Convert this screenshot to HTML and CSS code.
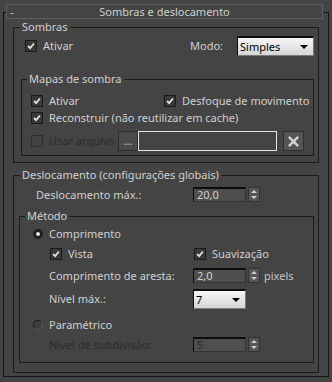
FILE: index.html
```html
<!DOCTYPE html>
<html lang="pt">
<head>
  <meta charset="UTF-8">
  <title>Sombras e deslocamento</title>
  <link rel="stylesheet" href="styles.css">
</head>
<body>
<div class="panel">
  <div class="rollout-head">
    <span class="toggle">-</span>
    <span class="rollout-title">Sombras e deslocamento</span>
  </div>

  <fieldset class="group group-sombras">
    <legend>Sombras</legend>
    <div class="row row-tall row-mode">
      <label class="check"><span class="box on"><svg viewBox="0 0 12 12"><path d="M2.5 6 L5 8.5 L9.5 3"/></svg></span>Ativar</label>
      <div class="mode">
        <span>Modo:</span>
        <div class="dropdown dropdown-mode"><span>Simples</span><i class="caret"></i></div>
      </div>
    </div>

    <fieldset class="group group-mapas">
      <legend>Mapas de sombra</legend>
      <div class="row row-pad-mapas">
        <label class="check col-mapas"><span class="box on"><svg viewBox="0 0 12 12"><path d="M2.5 6 L5 8.5 L9.5 3"/></svg></span>Ativar</label>
        <label class="check"><span class="box on"><svg viewBox="0 0 12 12"><path d="M2.5 6 L5 8.5 L9.5 3"/></svg></span>Desfoque de movimento</label>
      </div>
      <div class="row row-pad-mapas">
        <label class="check"><span class="box on"><svg viewBox="0 0 12 12"><path d="M2.5 6 L5 8.5 L9.5 3"/></svg></span>Reconstruir (não reutilizar em cache)</label>
      </div>
      <div class="row row-tall row-pad-mapas row-file">
        <label class="check disabled col-file"><span class="box"></span>Usar arquivo</label>
        <button class="btn-dots">...</button>
        <div class="file-field"></div>
        <button class="btn-clear"><svg viewBox="0 0 14 14"><path d="M2 2 L12 12 M12 2 L2 12"/></svg></button>
      </div>
    </fieldset>
  </fieldset>

  <fieldset class="group group-desloc">
    <legend>Deslocamento (configurações globais)</legend>
    <div class="row row-pad-desloc">
      <span class="label col-desloc">Deslocamento máx.:</span>
      <div class="spinner-field">20,0</div>
      <div class="spinner-arrows"><i class="up"></i><i class="down"></i></div>
    </div>

    <fieldset class="group group-metodo">
      <legend>Método</legend>
      <div class="row row-pad-radio">
        <label class="radio"><span class="dot on"></span>Comprimento</label>
      </div>
      <div class="row row-pad-sub row-vista">
        <label class="check col-vista"><span class="box on"><svg viewBox="0 0 12 12"><path d="M2.5 6 L5 8.5 L9.5 3"/></svg></span>Vista</label>
        <label class="check"><span class="box on"><svg viewBox="0 0 12 12"><path d="M2.5 6 L5 8.5 L9.5 3"/></svg></span>Suavização</label>
      </div>
      <div class="row row-pad-label row-aresta">
        <span class="label col-metodo">Comprimento de aresta:</span>
        <div class="spinner-field">2,0</div>
        <div class="spinner-arrows"><i class="up"></i><i class="down"></i></div>
        <span class="unit">pixels</span>
      </div>
      <div class="row row-tall row-pad-label row-nivel">
        <span class="label col-metodo">Nível máx.:</span>
        <div class="dropdown dropdown-small"><span>7</span><i class="caret"></i></div>
      </div>
      <div class="row row-pad-radio row-param">
        <label class="radio"><span class="dot"></span>Paramétrico</label>
      </div>
      <div class="row row-pad-label row-subdiv disabled">
        <span class="label col-metodo">Nível de subdivisão:</span>
        <div class="spinner-field">5</div>
        <div class="spinner-arrows"><i class="up"></i><i class="down"></i></div>
      </div>
    </fieldset>
  </fieldset>
</div>
</body>
</html>
```

FILE: styles.css
```css
:root {
  --panel-bg: #444444;
  --text-color: #d0d0d0;
  --disabled-text: #2c2c2c;
  --line-color: #1c1c1c;
  --frame-color: #161616;
}

* {
  box-sizing: border-box;
}

body {
  margin: 0;
  background-color: var(--panel-bg);
  color: var(--text-color);
  font-family: "Noto Sans", "Liberation Sans", sans-serif;
  font-size: 11px;
  line-height: 14px;
}

/* rollout frame */
.panel {
  margin: 12px 3px 0;
  height: 365px;
  border: 1px solid var(--frame-color);
}

.rollout-head {
  display: grid;
  grid-template-columns: 1fr auto 1fr;
  align-items: center;
  height: 15px;
  margin: -9px 5px 0 2px;
  border: 1px solid #5e5e5e;
  background-color: var(--panel-bg);
  line-height: 13px;
}

.toggle {
  padding-left: 3px;
}

/* group boxes */
.group {
  margin: 0;
  padding: 0;
  min-width: 0;
  border: 1px solid var(--line-color);
}

.group legend {
  padding: 0 2px;
  margin-left: 6px;
  line-height: 14px;
}

.group-sombras {
  margin: 1px 9px 0;
  padding: 2px 0 6px;
}

.group-mapas {
  margin: 16px 4px 0 7px;
  padding: 6px 0 4px;
}

.group-mapas legend,
.group-metodo legend {
  margin-left: 5px;
}

.group-desloc {
  margin: 5px 9px 0;
  padding: 4px 0 9px;
}

.group-metodo {
  margin: 6px 4px 0 5px;
  padding: 2px 0 9px;
}

/* rows */
.row {
  display: flex;
  align-items: center;
  height: 17px;
  white-space: nowrap;
}

.row-tall {
  height: 20px;
}

.row-mode {
  padding-left: 11px;
}

.mode {
  display: flex;
  align-items: center;
  gap: 14px;
  margin-left: auto;
  margin-right: 4px;
}

.row-pad-mapas {
  padding-left: 9px;
}

.row-file {
  margin-top: 5px;
}

.row-pad-desloc {
  padding-left: 22px;
}

.row-pad-radio {
  padding-left: 13px;
}

.row-pad-sub {
  padding-left: 30px;
}

.row-pad-label {
  padding-left: 29px;
}

.row-vista {
  margin-top: 3px;
}

.row-aresta,
.row-nivel {
  margin-top: 5px;
}

.row-param {
  margin-top: 7px;
}

.row-subdiv {
  margin-top: 3px;
}

.col-mapas {
  width: 133px;
}

.col-file {
  width: 87px;
}

.col-desloc {
  width: 157px;
}

.col-metodo {
  width: 144px;
}

.col-vista {
  width: 144px;
}

/* checkboxes and radios */
.check,
.radio {
  display: flex;
  align-items: center;
}

.box {
  width: 12px;
  height: 12px;
  margin-right: 6px;
  border: 1px solid #1a1a1a;
  background-color: #383838;
}

.box svg {
  display: block;
  width: 10px;
  height: 10px;
  fill: none;
  stroke: #e0e0e0;
  stroke-width: 2.2;
}

.disabled {
  color: var(--disabled-text);
}

.disabled .box {
  border-color: #2e2e2e;
  background-color: #424242;
}

.dot {
  width: 10px;
  height: 10px;
  margin-right: 6px;
  border-radius: 50%;
  border: 1px solid #1c1c1c;
  border-right-color: #5a5a5a;
  border-bottom-color: #5a5a5a;
  background-color: #3e3e3e;
}

.dot.on {
  border: 3px solid #1e1e1e;
  background-color: #e8e8e8;
}

/* inputs */
.dropdown {
  display: flex;
  align-items: center;
  justify-content: space-between;
  height: 20px;
  padding: 0 5px 0 2px;
  border: 1px solid #7a7a7a;
  border-top: 2px solid #0c0c0c;
  border-left-color: #0c0c0c;
  background: linear-gradient(#f6f6f6, #d6d6d6);
  color: #000;
}

.dropdown-mode {
  width: 77px;
}

.dropdown-small {
  width: 53px;
}

.caret {
  width: 0;
  height: 0;
  border-left: 4px solid transparent;
  border-right: 4px solid transparent;
  border-top: 4px solid #000;
}

.spinner-field {
  width: 53px;
  height: 15px;
  padding-left: 3px;
  border: 1px solid #333;
  border-top: 2px solid #0c0c0c;
  border-left-color: #0c0c0c;
  background-color: #4e4e4e;
  line-height: 12px;
}

.spinner-arrows {
  display: flex;
  flex-direction: column;
  align-items: center;
  justify-content: space-around;
  width: 12px;
  height: 15px;
  margin-left: 2px;
  border: 1px solid #333;
  background-color: #555;
}

.spinner-arrows i {
  width: 0;
  height: 0;
  border-left: 3px solid transparent;
  border-right: 3px solid transparent;
}

.spinner-arrows .up {
  border-bottom: 3px solid #cfcfcf;
}

.spinner-arrows .down {
  border-top: 3px solid #cfcfcf;
}

.unit {
  margin-left: 4px;
  color: #c4c4c4;
}

button {
  font: inherit;
  color: var(--text-color);
  padding: 0;
}

.btn-dots {
  width: 20px;
  height: 20px;
  border: 1px solid #2c2c2c;
  background-color: #4a4a4a;
  line-height: 12px;
}

.file-field {
  width: 139px;
  height: 20px;
  border: 1px solid #e6e6e6;
  background-color: var(--panel-bg);
}

.btn-clear {
  display: flex;
  align-items: center;
  justify-content: center;
  width: 21px;
  height: 20px;
  margin-left: 6px;
  border: 1px solid #2e2e2e;
  background-color: #555;
}

.btn-clear svg {
  width: 13px;
  height: 13px;
  fill: none;
  stroke: #d4d4d4;
  stroke-width: 2.4;
}
```
